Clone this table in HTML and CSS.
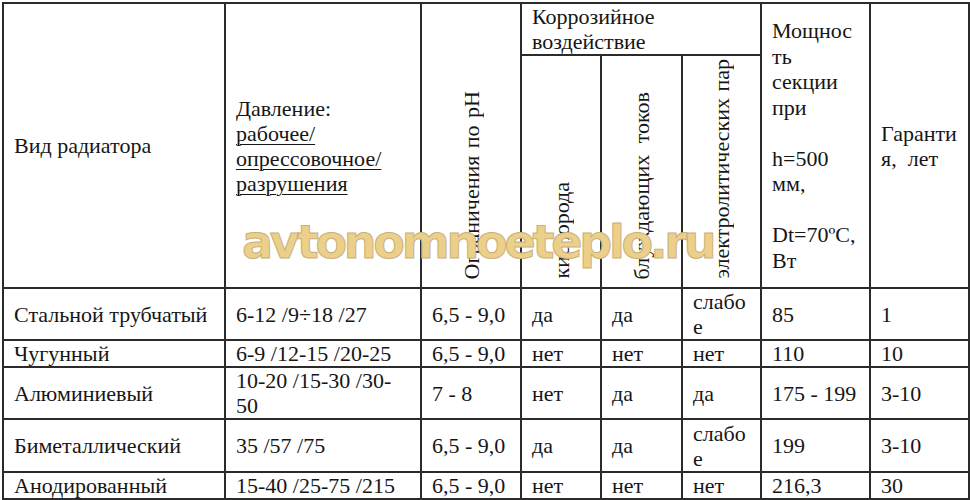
FILE: index.html
```html
<!DOCTYPE html>
<html lang="ru">
<head>
<meta charset="utf-8">
<title>Виды радиаторов</title>
<link rel="stylesheet" href="styles.css">
</head>
<body>
<div class="sheet">
<table class="radiators">
  <colgroup>
    <col class="c-name">
    <col class="c-press">
    <col class="c-ph">
    <col class="c-ox">
    <col class="c-cur">
    <col class="c-el">
    <col class="c-pow">
    <col class="c-war">
  </colgroup>
  <thead>
    <tr class="h1">
      <td rowspan="2">Вид радиатора</td>
      <td rowspan="2">Давление:<br><span class="u">рабочее/</span><br><span class="u">опрессовочное/</span><br><span class="u">разрушения</span></td>
      <td rowspan="2" class="rot"><span class="vt vt-ph">Ограничения по pH</span></td>
      <td colspan="3" class="corr">Коррозийное<br>воздействие</td>
      <td rowspan="2" class="pow">Мощнос<br>ть<br>секции<br>при<br><br>h=500<br>мм,<br><br>Dt=70ºC,<br>Вт</td>
      <td rowspan="2">Гаранти<br>я,&nbsp; лет</td>
    </tr>
    <tr class="h2">
      <td class="rot"><span class="vt">кислорода</span></td>
      <td class="rot"><span class="vt">блуждающих токов</span></td>
      <td class="rot"><span class="vt vt-el">электролитических пар</span></td>
    </tr>
  </thead>
  <tbody>
    <tr class="r-tall">
      <td>Стальной трубчатый</td><td>6-12 /9÷18 /27</td><td>6,5 - 9,0</td><td>да</td><td>да</td><td>слабо<br>е</td><td>85</td><td>1</td>
    </tr>
    <tr class="r-short">
      <td>Чугунный</td><td>6-9 /12-15 /20-25</td><td>6,5 - 9,0</td><td>нет</td><td>нет</td><td>нет</td><td>110</td><td>10</td>
    </tr>
    <tr class="r-mid">
      <td>Алюминиевый</td><td>10-20 /15-30 /30-<br>50</td><td>7 - 8</td><td>нет</td><td>да</td><td>да</td><td>175 - 199</td><td>3-10</td>
    </tr>
    <tr class="r-tall2">
      <td>Биметаллический</td><td>35 /57 /75</td><td>6,5 - 9,0</td><td>да</td><td>да</td><td>слабо<br>е</td><td>199</td><td>3-10</td>
    </tr>
    <tr class="r-last">
      <td>Анодированный</td><td>15-40 /25-75 /215</td><td>6,5 - 9,0</td><td>нет</td><td>нет</td><td>нет</td><td>216,3</td><td>30</td>
    </tr>
  </tbody>
</table>
<div class="watermark">avtonomnoeteplo.ru</div>
</div>
</body>
</html>
```

FILE: styles.css
```css
html, body {
  margin: 0;
  padding: 0;
  background: #ffffff;
}

.sheet {
  position: relative;
  padding: 2px 0 0 2px;
  width: 970px;
  height: 500px;
  box-sizing: border-box;
  overflow: hidden;
}

.radiators {
  border-collapse: collapse;
  table-layout: fixed;
  width: 966px;
  font-family: "Liberation Serif", "Times New Roman", serif;
  font-size: 22px;
  line-height: 25px;
  color: #161616;
}

.radiators td {
  border: 2px solid #2b2b2b;
  padding: 0 2px 0 10px;
  vertical-align: middle;
  text-align: left;
  overflow: hidden;
  white-space: nowrap;
}

.c-name { width: 222px; }
.c-press { width: 196px; }
.c-ph { width: 100px; }
.c-ox { width: 80px; }
.c-cur { width: 81px; }
.c-el { width: 79px; }
.c-pow { width: 109px; }
.c-war { width: 99px; }

.h1 { height: 52px; }
.h2 { height: 233px; }

.u {
  text-decoration: underline;
  text-underline-offset: 3px;
  text-decoration-thickness: 1px;
}

.pow {
  line-height: 25.5px;
}

.radiators td.rot {
  text-align: center;
  vertical-align: bottom;
  padding: 0 0 8px 0;
  line-height: 0;
}

.vt {
  display: inline-block;
  vertical-align: top;
  line-height: 25px;
  writing-mode: vertical-rl;
  transform: rotate(180deg);
  word-spacing: 6px;
  white-space: nowrap;
}

.vt-ph {
  word-spacing: 2px;
}

.vt-el {
  word-spacing: 1px;
}

.r-tall { height: 52px; }
.r-short { height: 27px; }
.r-mid { height: 51px; }
.r-tall2 { height: 53px; }
.r-last { height: 26px; }

.watermark {
  position: absolute;
  left: 242px;
  top: 212px;
  font-family: "DejaVu Sans", sans-serif;
  font-weight: bold;
  font-size: 46px;
  letter-spacing: -3.2px;
  line-height: 60px;
  color: #ecd08a;
  -webkit-text-stroke: 1px #c8b080;
  white-space: nowrap;
}
```
